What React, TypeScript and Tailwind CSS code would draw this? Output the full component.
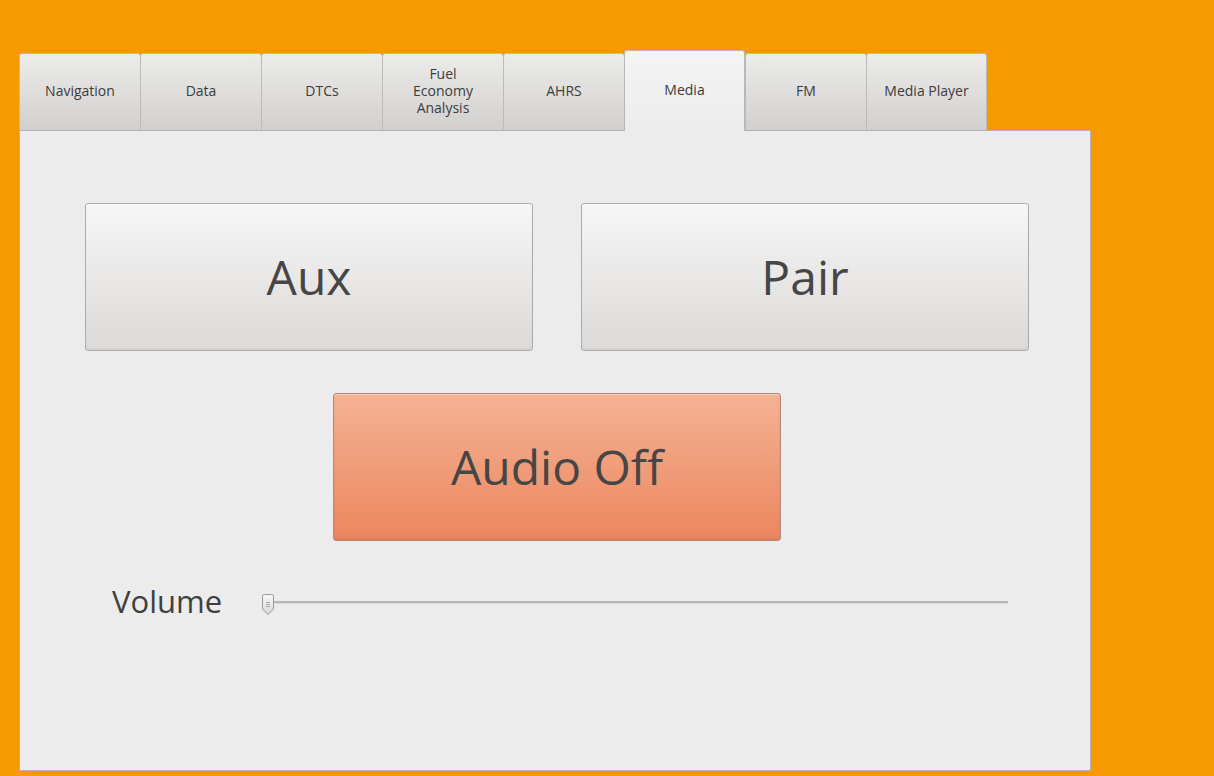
import React from "react";

const tabs = [
  "Navigation",
  "Data",
  "DTCs",
  "Fuel\nEconomy\nAnalysis",
  "AHRS",
  "Media",
  "FM",
  "Media Player",
];

const font = { fontFamily: '"Open Sans", "Noto Sans", sans-serif' };

function Tab({ label, active, last }: { label: string; active: boolean; last: boolean }) {
  if (active) {
    return (
      <div className="relative z-10 -mb-px flex h-[81px] w-[121px] items-center justify-center rounded-t-[3px] border border-b-0 border-[#b9b7b5] bg-gradient-to-b from-[#f4f4f4] to-[#ececec] pb-[3px] text-center text-[14px] leading-[17px] text-[#3c3c3c]">
        {label}
      </div>
    );
  }
  return (
    <div
      className={`flex h-[77px] w-[121px] items-center justify-center rounded-t-[3px] border-t border-l border-[#bdbbb9] bg-gradient-to-b from-[#ececeb] to-[#d2d0ce] pb-[3px] text-center text-[14px] leading-[17px] text-[#3c3c3c] whitespace-pre-line ${
        last ? "border-r" : ""
      }`}
    >
      {label}
    </div>
  );
}

function BigButton({ label, warm }: { label: string; warm?: boolean }) {
  return (
    <button
      className={`flex h-[148px] w-[448px] items-center justify-center rounded-[3px] border text-[48px] text-[#464646] ${
        warm
          ? "border-[#b08a7c] bg-gradient-to-b from-[#f4b294] to-[#eb865e] shadow-[inset_0_1px_0_rgba(255,255,255,0.35),inset_0_-2px_2px_rgba(200,90,50,0.2)]"
          : "border-[#aeaba8] bg-gradient-to-b from-[#f6f6f6] to-[#dcdad8] shadow-[inset_0_1px_0_rgba(255,255,255,0.7),inset_0_-2px_2px_rgba(0,0,0,0.04)]"
      }`}
    >
      {label}
    </button>
  );
}

function Slider() {
  return (
    <div className="relative mt-[6px] flex h-[21px] w-[746px] items-start">
      <div className="ml-[6px] mt-[7px] h-[3px] flex-1 border-b border-[#dedcda] bg-[#b9b6b2]" />
      <svg className="absolute left-0 top-0" width="12" height="21" viewBox="0 0 12 21">
        <defs>
          <linearGradient id="hg" x1="0" y1="0" x2="0" y2="1">
            <stop offset="0" stopColor="#f8f8f8" />
            <stop offset="1" stopColor="#d8d6d4" />
          </linearGradient>
        </defs>
        <path
          d="M2.5 0.5 H9.5 Q11.5 0.5 11.5 2.5 V15 L6 20.5 L0.5 15 V2.5 Q0.5 0.5 2.5 0.5 Z"
          fill="url(#hg)"
          stroke="#9c9996"
        />
        <path d="M4 8.5 H8 M4 10.5 H8 M4 12.5 H8" stroke="#a9a6a3" strokeWidth="1" />
      </svg>
    </div>
  );
}

export default function App() {
  return (
    <div className="h-[776px] w-[1214px] bg-[#f79900] pl-[19px] pt-[50px]" style={font}>
      <div className="flex h-[80px] items-end">
        {tabs.map((t, i) => (
          <Tab key={t} label={t} active={t === "Media"} last={i === tabs.length - 1} />
        ))}
      </div>
      <div className="h-[641px] w-[1072px] border border-[#b4b2b0] bg-[#ececec] pl-[65px] pt-[72px]">
        <div className="flex w-[944px] flex-col items-center">
          <div className="flex gap-[48px]">
            <BigButton label="Aux" />
            <BigButton label="Pair" />
          </div>
          <div className="mt-[42px]">
            <BigButton label="Audio Off" warm />
          </div>
          <div className="mt-[40px] flex h-[40px] w-full items-center pl-[27px]">
            <span className="w-[150px] text-[31px] text-[#3f3f3f]">Volume</span>
            <Slider />
          </div>
        </div>
      </div>
    </div>
  );
}
